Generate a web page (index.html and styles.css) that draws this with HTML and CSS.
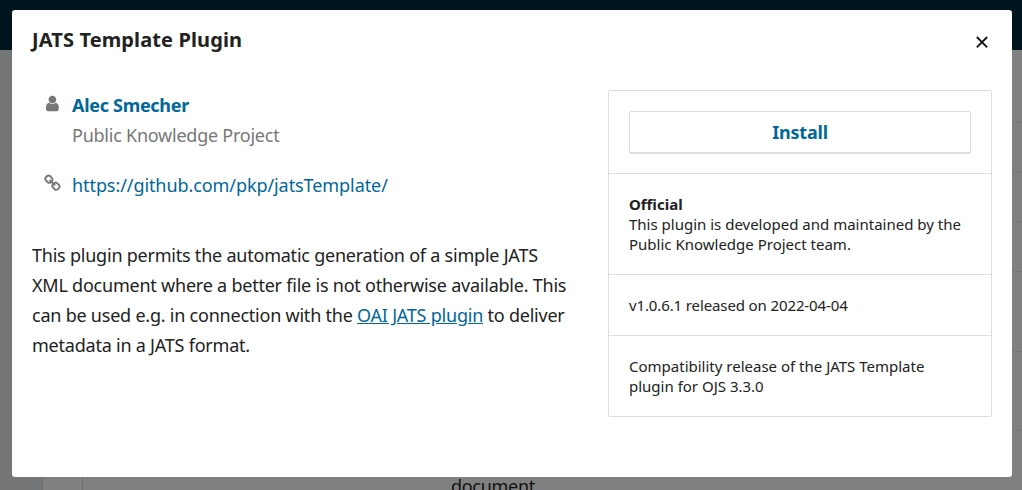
FILE: index.html
```
<!DOCTYPE html>
<html lang="en">
<head>
<meta charset="utf-8">
<title>JATS Template Plugin</title>
<link rel="stylesheet" href="styles.css">
</head>
<body>
<div class="page">
  <div class="topbar"></div>
  <div class="workspace">
    <div class="sidebar"></div>
    <div class="toggle-col"></div>
    <div class="grid">
      <div class="row row-first"></div>
      <div class="row row-short"></div>
      <div class="row"></div>
      <div class="row"></div>
      <div class="row row-tall"></div>
      <div class="row row-medium"></div>
      <div class="row-last">document</div>
    </div>
  </div>
</div>
<div class="modal">
  <header class="modal-header">
    <h1 class="title">JATS Template Plugin</h1>
    <button class="close" aria-label="Close"><svg viewBox="0 0 12 12"><path d="M.8 1 11.2 11.4M11.2 1 .8 11.4"/></svg></button>
  </header>
  <div class="modal-body">
    <main class="details">
      <div class="entry author">
        <svg class="icon" viewBox="-40 -50 1792 1792"><path d="M1536 1399q0 109-62.5 187t-150.5 78h-854q-88 0-150.5-78t-62.5-187q0-85 8.5-160.5t31.5-152 58.5-131 94-89 134.5-34.5q131 128 313 128t313-128q76 0 134.5 34.5t94 89 58.5 131 31.5 152 8.5 160.5zm-256-887q0 159-112.5 271.5t-271.5 112.5-271.5-112.5-112.5-271.5 112.5-271.5 271.5-112.5 271.5 112.5 112.5 271.5z"/></svg>
        <div><a class="name" href="#">Alec Smecher</a><div class="affiliation">Public Knowledge Project</div></div>
      </div>
      <div class="entry homepage">
        <svg class="icon" viewBox="-40 -30 1792 1792"><path d="M1520 1216q0-40-28-68l-208-208q-28-28-68-28-42 0-72 32 3 3 19 18.5t21.5 21.5 15 19 13 25.5 3.5 27.5q0 40-28 68t-68 28q-15 0-27.5-3.5t-25.5-13-19-15-21.5-21.5-18.5-19q-33 31-33 73 0 40 28 68l206 207q27 27 68 27 40 0 68-26l147-146q28-28 28-67zm-703-705q0-40-28-68l-206-207q-28-28-68-28-39 0-68 27l-147 146q-28 28-28 67 0 40 28 68l208 208q27 27 68 27 42 0 72-31-3-3-19-18.5t-21.5-21.5-15-19-13-25.5-3.5-27.5q0-40 28-68t68-28q15 0 27.5 3.5t25.5 13 19 15 21.5 21.5 18.5 19q33-31 33-73zm895 705q0 120-85 203l-147 146q-83 83-203 83-121 0-204-85l-206-207q-83-83-83-203 0-123 88-209l-88-88q-86 88-208 88-120 0-204-84l-208-208q-84-84-84-204t85-203l147-146q83-83 203-83 121 0 204 85l206 207q83 83 83 203 0 123-88 209l88 88q86-88 208-88 120 0 204 84l208 208q84 84 84 204z"/></svg>
        <a class="url" href="#">https://github.com/pkp/jatsTemplate/</a>
      </div>
      <p class="description">This plugin permits the automatic generation of a simple JATS XML document where a better file is not otherwise available. This can be used e.g. in connection with the <a href="#">OAI JATS plugin</a> to deliver metadata in a JATS format.</p>
    </main>
    <aside class="panel">
      <div class="panel-item"><button class="install">Install</button></div>
      <div class="panel-item"><strong>Official</strong><div>This plugin is developed and maintained by the Public Knowledge Project team.</div></div>
      <div class="panel-item version">v1.0.6.1 released on 2022-04-04</div>
      <div class="panel-item">Compatibility release of the JATS Template plugin for OJS 3.3.0</div>
    </aside>
  </div>
</div>
</body>
</html>
```
FILE: styles.css
```
* { box-sizing: border-box; }
body {
  margin: 0;
  height: 490px;
  overflow: hidden;
  font: 15px/20px "Noto Sans", sans-serif;
  color: #222;
}
a { color: #006798; }
.page { height: 490px; display: flex; flex-direction: column; overflow: hidden; }
.topbar { height: 50px; flex: none; background: #00151e; }
.workspace { height: 440px; display: flex; background: #808080; }
.sidebar { width: 43px; background: #757678; border-right: 1px solid #6e6e6e; }
.toggle-col { width: 40px; border-right: 1px solid #6f6f6f; }
.grid { flex: 1; }
.row { height: 50px; border-bottom: 1px solid #777; }
.row-first { height: 73px; }
.row-short { height: 49px; }
.row-tall { height: 80px; }
.row-medium { height: 79px; }
.row-last { padding: 40px 0 0 368px; font-size: 18px; line-height: 30px; letter-spacing: -.3px; color: #111; }
.modal {
  position: absolute;
  top: 10px;
  left: 12px;
  width: 1000px;
  height: 467px;
  background: #fff;
  border-radius: 3px;
}
.modal-header { height: 80px; padding: 15px 20px 0; display: flex; justify-content: space-between; align-items: flex-start; }
.title { margin: 0; font-size: 20px; line-height: 30px; font-weight: 700; letter-spacing: .12px; }
.close { margin: 11px 4px 0 0; padding: 0; border: 0; background: none; width: 12px; height: 12px; }
.close svg { display: block; width: 12px; height: 12px; overflow: visible; fill: none; stroke: #111; stroke-width: 1.8; }
.modal-body { display: flex; align-items: flex-start; justify-content: space-between; padding: 0 20px; }
.details { width: 540px; font-size: 18px; line-height: 30px; letter-spacing: -.24px; }
.entry { display: flex; gap: 11px; padding-left: 11px; }
.entry a { text-decoration: none; }
.icon { width: 18px; height: 18px; margin-top: 4px; overflow: visible; fill: #777; flex: none; }
.name { font-weight: 700; letter-spacing: -.3px; }
.affiliation { color: #777; }
.homepage { margin-top: 20px; }
.url { letter-spacing: -.08px; }
.description { margin: 40px 0 0; letter-spacing: -.225px; }
.panel { width: 384px; border: 1px solid #ddd; border-radius: 2px; }
.panel-item { padding: 20px; border-bottom: 1px solid #ddd; }
.panel-item:last-child { border-bottom: 0; }
.version { letter-spacing: -.12px; }
.install {
  display: block;
  width: 100%;
  height: 42px;
  padding: 0;
  border: 1px solid #ddd;
  border-radius: 2px;
  box-shadow: 0 1px 0 #ddd;
  background: #fff;
  color: #006798;
  font: 700 18px/40px "Noto Sans", sans-serif;
  letter-spacing: -.2px;
}
```
